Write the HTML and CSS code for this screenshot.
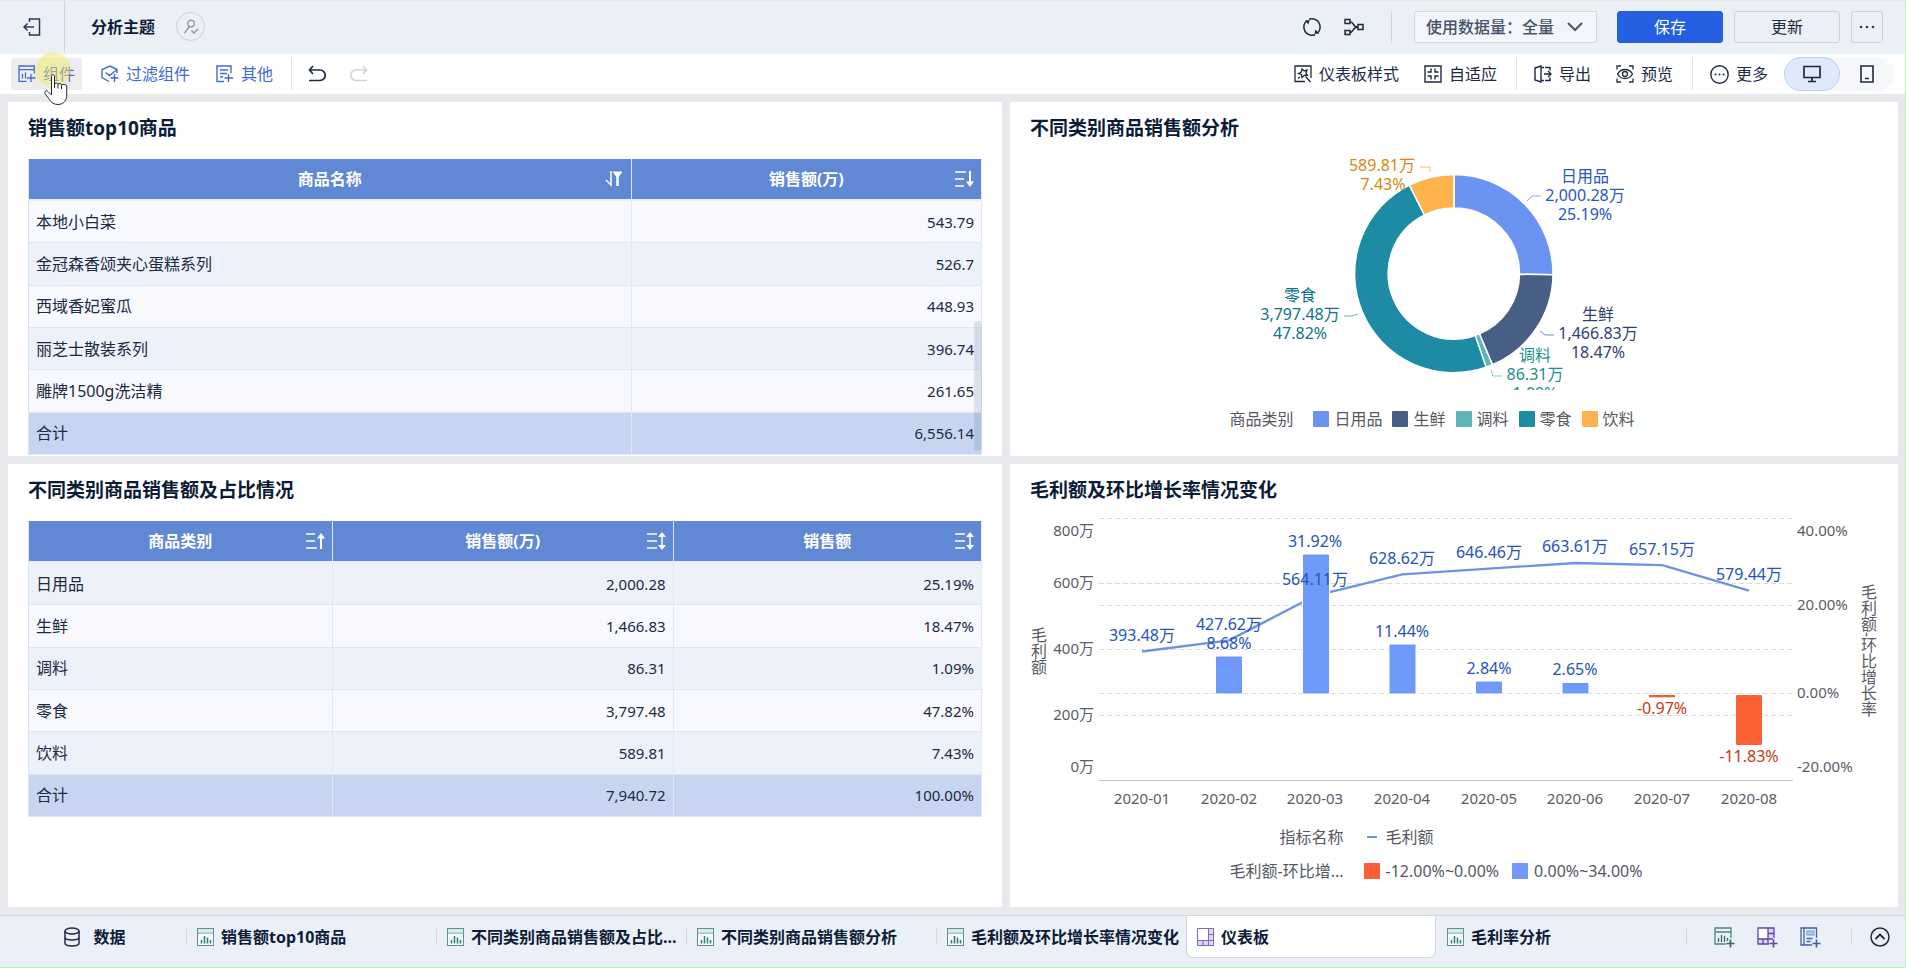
FILE: index.html
```html
<!DOCTYPE html>
<html lang="zh-CN">
<head>
<meta charset="utf-8">
<title>分析主题</title>
<link rel="stylesheet" href="styles.css">
</head>
<body>
<svg class="defs" aria-hidden="true">
  <symbol id="i-chart" viewBox="0 0 17 18">
    <rect x="0.5" y="0.5" width="16" height="17" fill="#f4faf9" stroke="#5f908f"/>
    <path d="M1 5h15" stroke="#5f908f"/><path d="M1 1h15v3.5H1z" fill="#d8ebea"/>
    <path d="M4.500 12v3.500M7.500 8v7.500M10.500 9.500v6M13.500 12v3.500" stroke="#2f7d76" stroke-width="1.500"/>
  </symbol>
  <symbol id="i-board" viewBox="0 0 17 18">
    <rect x="0.5" y="0.5" width="16" height="17" fill="#dcd6f5"/>
    <rect x="0.5" y="0.5" width="11" height="12" fill="#fff"/>
    <path d="M.5.5h16v17H.5zM11.500.5v17M.5 12.500h16M11.500 6.500h5M6 12.500v5" fill="none" stroke="#7a6bc0"/>
  </symbol>
  <symbol id="i-asc" viewBox="0 0 20 18">
    <path d="M1 2h9M1 9h9M1 16h11" stroke="#fff" stroke-width="1.500"/><path d="M16 17V5" stroke="#fff" stroke-width="2"/><path d="M16 1l4 5.500h-8z" fill="#fff"/>
  </symbol>
  <symbol id="i-desc" viewBox="0 0 20 18">
    <path d="M1 2h11M1 9h9M1 16h9" stroke="#fff" stroke-width="1.500"/><path d="M16 1v12" stroke="#fff" stroke-width="2"/><path d="M16 17l4-5.500h-8z" fill="#fff"/>
  </symbol>
  <symbol id="i-both" viewBox="0 0 20 18">
    <path d="M1 2h10M1 9h10M1 16h10" stroke="#fff" stroke-width="1.500"/><path d="M16 3v12" stroke="#fff" stroke-width="1.500"/><path d="M16 0l4 5h-8zM16 18l4-5h-8z" fill="#fff"/>
  </symbol>
</svg>

<header class="topbar">
  <button class="back" aria-label="退出">
    <svg width="18" height="18" viewBox="0 0 18 18"><path d="M6.500 4V1h10v16h-10v-3M1 9h10M4.500 5.500L1 9l3.500 3.500" fill="none" stroke="#2b3a52" stroke-width="1.500"/></svg>
  </button>
  <h1 class="doc-title">分析主题</h1>
  <button class="avatar" aria-label="协作者">
    <svg width="16" height="16" viewBox="0 0 16 16" fill="none" stroke="#8d939d" stroke-width="1.300"><circle cx="8" cy="4.500" r="3.300"/><path d="M6.500 7.500L1.500 14M8.500 11.500l2.500 2.500 4-4"/></svg>
  </button>
  <div class="top-right">
    <button class="ico" aria-label="刷新"><svg width="20" height="20" viewBox="0 0 20 20"><path d="M8 18A8.300 8.300 0 0 1 4.500 4M12 2A8.300 8.300 0 0 1 15.500 16M7 2.200a8.300 8.300 0 0 1 5-.2M13 17.800a8.300 8.300 0 0 1-5 .2" fill="none" stroke="#1c2a42" stroke-width="1.500"/><path d="M3 3.500l4.500-.5-1 4.500zM17 16.500l-4.500.5 1-4.500z" fill="#1c2a42"/></svg></button>
    <button class="ico" aria-label="血缘"><svg width="20" height="18" viewBox="0 0 20 18" fill="none" stroke="#1c2a42" stroke-width="1.500"><path d="M1 1.500h5v4H1zM1 12.500h5v4H1zM14 6.500h5v5h-5zM6 3.500c4 0 2 5.500 8 5.500M6 14.500c4 0 2-5.500 8-5.500"/></svg></button>
    <span class="sep top-sep"></span>
    <label class="select-box">
      <select aria-label="使用数据量"><option>使用数据量：全量</option></select>
      <svg width="16" height="10" viewBox="0 0 16 10"><path d="M1 1l7 7 7-7" fill="none" stroke="#4a566b" stroke-width="2"/></svg>
    </label>
    <button class="btn primary">保存</button>
    <button class="btn">更新</button>
    <button class="btn dots" aria-label="更多操作"><svg width="16" height="4" viewBox="0 0 16 4" fill="#333e50"><circle cx="2" cy="2" r="1.300"/><circle cx="8" cy="2" r="1.300"/><circle cx="14" cy="2" r="1.300"/></svg></button>
  </div>
</header>

<nav class="toolbar">
  <button class="tool hover">
    <svg width="18" height="18" viewBox="0 0 18 18" fill="none" stroke="#4468d0" stroke-width="1.300"><path d="M16.300 8.500V1H1v15.300h7.500M1 4.700h15.300M4.500 9v4.500M7.500 7.500v6M13 9v8M9 13h8.500"/></svg>
    <span>组件</span>
  </button>
  <button class="tool">
    <svg width="18" height="18" viewBox="0 0 18 18" fill="none" stroke="#4468d0" stroke-width="1.400"><path d="M16 8V4.500L9 1 1 4.500v8L8 16.500M4.500 7.500l4 3 7.500-6M13.500 9v8M9.500 13h8"/></svg>
    <span>过滤组件</span>
  </button>
  <button class="tool">
    <svg width="18" height="18" viewBox="0 0 18 18" fill="none" stroke="#4468d0" stroke-width="1.400"><path d="M15 8V1H1v15.500h7M4 5h8M4 8.500h7M4 12h3M12.500 9v8M8.500 13h8.500"/></svg>
    <span>其他</span>
  </button>
  <span class="sep"></span>
  <button class="tool icon-only" aria-label="撤销"><svg width="18" height="18" viewBox="0 0 18 18" fill="none" stroke="#1c2a42" stroke-width="1.700"><path d="M5 1L1.500 5 5 9M1.500 5H12a4.800 4.800 0 0 1 0 10.500H1"/></svg></button>
  <button class="tool icon-only" aria-label="重做" disabled><svg width="18" height="18" viewBox="0 0 18 18" fill="none" stroke="#d2d4d8" stroke-width="1.700"><path d="M13 1l3.500 4L13 9M16.500 5H6a4.800 4.800 0 0 0 0 10.500h11"/></svg></button>

  <div class="tools-right">
    <button class="tool dark">
      <svg width="18" height="18" viewBox="0 0 18 18" fill="none" stroke="#1c2a42" stroke-width="1.300"><path d="M11 16.500H1V1h16v12M11.500 11.500l5 5.500M8 4l2 1.800 3-.8-1 3 1.500 2.500-3-.3L8 12.500l-.6-3L4.500 8.500 7.300 7zM4 13.500l2-1.500"/></svg>
      <span>仪表板样式</span>
    </button>
    <button class="tool dark">
      <svg width="18" height="18" viewBox="0 0 18 18" fill="none" stroke="#1c2a42" stroke-width="1.400"><path d="M1 1h16v16H1zM7 3.500V7H3.500M11 3.500V7h3.500M7 14.500V11H3.500M11 14.500V11h3.500"/></svg>
      <span>自适应</span>
    </button>
    <span class="sep"></span>
    <button class="tool dark">
      <svg width="18" height="18" viewBox="0 0 18 18" fill="none" stroke="#1c2a42" stroke-width="1.400"><path d="M1 3l6-2v16l-6-2zM7 2.500h3M7 15.500h3M11 2.500h5v3M11 15.500h5v-3M10 9h7M14 6l3 3-3 3"/></svg>
      <span>导出</span>
    </button>
    <button class="tool dark">
      <svg width="18" height="18" viewBox="0 0 18 18" fill="none" stroke="#1c2a42" stroke-width="1.300"><path d="M1 4.500V1h4M13 1h4v3.500M1 13.500V17h4M13 17h4v-3.500M1.500 9C5 3 13 3 16.500 9 13 15 5 15 1.500 9z"/><circle cx="9" cy="9" r="2.500"/></svg>
      <span>预览</span>
    </button>
    <span class="sep"></span>
    <button class="tool dark last">
      <svg width="19" height="19" viewBox="0 0 19 19"><circle cx="9.500" cy="9.500" r="8.700" fill="none" stroke="#1c2a42" stroke-width="1.400"/><g fill="#1c2a42"><circle cx="5.500" cy="9.500" r="1"/><circle cx="9.500" cy="9.500" r="1"/><circle cx="13.500" cy="9.500" r="1"/></g></svg>
      <span>更多</span>
    </button>
    <div class="device">
      <button class="dev on" aria-label="电脑端"><svg width="18" height="18" viewBox="0 0 18 18" fill="none" stroke="#1c2a42" stroke-width="1.700"><path d="M1 1.500h16v11H1zM9 12.500v4M5 16.500h8"/></svg></button>
      <button class="dev" aria-label="移动端"><svg width="14" height="18" viewBox="0 0 14 18" fill="none" stroke="#1c2a42" stroke-width="1.600"><path d="M1 1h12v16H1zM5 13.500h4"/></svg></button>
    </div>
  </div>
</nav>

<svg class="pointer" width="40" height="54" viewBox="35 52 40 54" aria-hidden="true">
  <circle cx="53" cy="70" r="17.500" fill="#f2ea62" fill-opacity=".5"/>
  <path d="M51.500 76.500c0-2.500 3-2.500 3 0V84c.5-1.500 3.300-1.300 3.500.3.500-1.300 3.500-1 3.500.7.500-1 5.200-.8 5.200 1v9c0 5-3 9.500-8.700 9.500-4 0-7-2-8.500-5l-4.500-6c-.8-2.500 1.500-3.500 3-2l3.500 3.500z" fill="#fff" stroke="#2a2a33" stroke-width="1"/>
  <path d="M54.500 83v5M58 84v4.500M61.500 85v4" stroke="#2a2a33"/>
</svg>

<main class="board">
  <section class="panel">
    <h2>销售额top10商品</h2>
    <div class="table-wrap">
      <table class="grid light-first">
        <colgroup><col class="c-name"><col></colgroup>
        <thead><tr>
          <th><div class="th"><span>商品名称</span><svg width="20" height="18" viewBox="-1 0 20 18"><path d="M6 1v14L1 10" fill="none" stroke="#fff" stroke-width="1.500"/><path d="M8 2h9M8.500 2.500l4 5 4-5z" stroke="#fff" fill="#fff"/><path d="M12.500 5v11" stroke="#fff" stroke-width="2.500"/></svg></div></th>
          <th><div class="th"><span>销售额(万)</span><svg width="20" height="18"><use href="#i-desc"/></svg></div></th>
        </tr></thead>
        <tbody>
          <tr><td>本地小白菜</td><td class="num">543.79</td></tr>
          <tr><td>金冠森香颂夹心蛋糕系列</td><td class="num">526.7</td></tr>
          <tr><td>西域香妃蜜瓜</td><td class="num">448.93</td></tr>
          <tr><td>丽芝士散装系列</td><td class="num">396.74</td></tr>
          <tr><td>雕牌1500g洗洁精</td><td class="num">261.65</td></tr>
          <tr class="total"><td>合计</td><td class="num">6,556.14</td></tr>
        </tbody>
      </table>
      <span class="scroll-thumb"></span>
    </div>
  </section>

  <section class="panel chart-panel">
    <h2>不同类别商品销售额分析</h2>
    <svg class="chart" viewBox="1010 144 888 246" role="img" aria-label="不同类别商品销售额分析">
      <g stroke="#fff" stroke-width="1.500">
        <path d="M1454 174.500A99 99 0 0 1 1553 274.700L1519.500 274.300A65.500 65.500 0 0 0 1454 208z" fill="#6b94f2"/>
        <path d="M1553 274.700A99 99 0 0 1 1492.400 364.700L1479.400 333.900A65.500 65.500 0 0 0 1519.500 274.300z" fill="#485e84"/>
        <path d="M1492.400 364.700A99 99 0 0 1 1486.100 367.200L1475.200 335.500A65.500 65.500 0 0 0 1479.400 333.900z" fill="#5eb5b7"/>
        <path d="M1486.100 367.200A99 99 0 0 1 1409.400 185.100L1424.500 215A65.500 65.500 0 0 0 1475.200 335.500z" fill="#1d8ba4"/>
        <path d="M1409.400 185.100A99 99 0 0 1 1454 174.500L1454 208A65.500 65.500 0 0 0 1424.500 215z" fill="#ffb34d"/>
      </g>
      <g fill="none" stroke-width="1">
        <path d="M1420 167h10v5" stroke="#f2bd77"/>
        <path d="M1527 201l5-5h9" stroke="#8fabf0"/>
        <path d="M1540 331l5 4h9" stroke="#7e8ba6"/>
        <path d="M1491 370l2 6h9" stroke="#8cc9ca"/>
        <path d="M1358 314l-6 2h-8" stroke="#6db2c0"/>
      </g>
      <g class="label">
        <g fill="#d9860f"><text x="1382" y="171">589.81万</text><text x="1383" y="190">7.43%</text></g>
        <g fill="#2a56c0"><text x="1585" y="182">日用品</text><text x="1585" y="201">2,000.28万</text><text x="1585" y="220">25.19%</text></g>
        <g fill="#2f3f70"><text x="1598" y="320">生鲜</text><text x="1598" y="339">1,466.83万</text><text x="1598" y="358">18.47%</text></g>
        <g fill="#1e8f8e"><text x="1535" y="361">调料</text><text x="1535" y="380">86.31万</text><text x="1535" y="399">1.09%</text></g>
        <g fill="#117388"><text x="1300" y="301">零食</text><text x="1300" y="320">3,797.48万</text><text x="1300" y="339">47.82%</text></g>
      </g>
    </svg>
    <div class="legend pie-legend">
      <span class="lg-title">商品类别</span>
      <span class="lg"><i class="sw blue"></i>日用品</span>
      <span class="lg"><i class="sw navy"></i>生鲜</span>
      <span class="lg"><i class="sw aqua"></i>调料</span>
      <span class="lg"><i class="sw teal"></i>零食</span>
      <span class="lg"><i class="sw amber"></i>饮料</span>
    </div>
  </section>

  <section class="panel">
    <h2>不同类别商品销售额及占比情况</h2>
    <div class="table-wrap">
      <table class="grid">
        <colgroup><col class="c-a"><col class="c-b"><col></colgroup>
        <thead><tr>
          <th><div class="th"><span>商品类别</span><svg width="20" height="18"><use href="#i-asc"/></svg></div></th>
          <th><div class="th"><span>销售额(万)</span><svg width="20" height="18"><use href="#i-both"/></svg></div></th>
          <th><div class="th"><span>销售额</span><svg width="20" height="18"><use href="#i-both"/></svg></div></th>
        </tr></thead>
        <tbody>
          <tr><td>日用品</td><td class="num">2,000.28</td><td class="num">25.19%</td></tr>
          <tr><td>生鲜</td><td class="num">1,466.83</td><td class="num">18.47%</td></tr>
          <tr><td>调料</td><td class="num">86.31</td><td class="num">1.09%</td></tr>
          <tr><td>零食</td><td class="num">3,797.48</td><td class="num">47.82%</td></tr>
          <tr><td>饮料</td><td class="num">589.81</td><td class="num">7.43%</td></tr>
          <tr class="total"><td>合计</td><td class="num">7,940.72</td><td class="num">100.00%</td></tr>
        </tbody>
      </table>
    </div>
  </section>

  <section class="panel chart-panel">
    <h2>毛利额及环比增长率情况变化</h2>
    <svg class="chart" viewBox="1010 506 888 314" role="img" aria-label="毛利额及环比增长率情况变化">
      <path d="M1099 518.500h694M1099 583.500h694M1099 605.500h694M1099 649.500h694M1099 693.500h694M1099 715.500h694" stroke="#dcdcdf" stroke-dasharray="5 3"/>
      <path d="M1099 780.500h694" stroke="#c6c6c9"/>
      <polyline points="1142,651.500 1229,640.300 1315.600,595.600 1402.300,574.400 1489,568.600 1575.600,563 1662.300,565.100 1749,590.600" fill="none" stroke="#6f92e2" stroke-width="2.300"/>
      <g fill="#6f99fb" stroke="#fff">
        <rect x="1215.500" y="656" width="27" height="38" rx="1.500"/>
        <rect x="1302.500" y="554" width="27" height="140" rx="1.500"/>
        <rect x="1389" y="644" width="27" height="50" rx="1.500"/>
        <rect x="1475.500" y="681" width="27" height="13" rx="1.500"/>
        <rect x="1562" y="682.500" width="27" height="11.500" rx="1.500"/>
      </g>
      <rect x="1649" y="695" width="26" height="2.300" fill="#e5603f"/>
      <rect x="1736" y="695" width="26" height="50" rx="1.500" fill="#fa6033"/>
      <g class="label" fill="#2553bd">
        <text x="1142" y="641">393.48万</text><text x="1229" y="630">427.62万</text><text x="1229" y="649">8.68%</text>
        <text x="1315" y="547">31.92%</text><text x="1315" y="585">564.11万</text>
        <text x="1402" y="564">628.62万</text><text x="1402" y="637">11.44%</text>
        <text x="1489" y="558">646.46万</text><text x="1489" y="674">2.84%</text>
        <text x="1575" y="552">663.61万</text><text x="1575" y="675">2.65%</text>
        <text x="1662" y="555">657.15万</text><text x="1749" y="580">579.44万</text>
      </g>
      <g class="label" fill="#c53a16"><text x="1662" y="714">-0.97%</text><text x="1749" y="762">-11.83%</text></g>
      <g class="axis end"><text x="1094" y="536">800万</text><text x="1094" y="588">600万</text><text x="1094" y="654">400万</text><text x="1094" y="720">200万</text><text x="1094" y="772">0万</text></g>
      <g class="axis"><text x="1797" y="536">40.00%</text><text x="1797" y="610">20.00%</text><text x="1797" y="698">0.00%</text><text x="1797" y="772">-20.00%</text></g>
      <g class="axis mid">
        <text x="1142" y="804">2020-01</text><text x="1229" y="804">2020-02</text><text x="1315" y="804">2020-03</text><text x="1402" y="804">2020-04</text>
        <text x="1489" y="804">2020-05</text><text x="1575" y="804">2020-06</text><text x="1662" y="804">2020-07</text><text x="1749" y="804">2020-08</text>
      </g>
      <text class="axis-title" x="1038" y="627">毛利额</text>
      <text class="axis-title" x="1868" y="584">毛利额-环比增长率</text>
    </svg>
    <div class="legend combo-legend">
      <span class="lg-title">指标名称</span>
      <div class="lg-items"><span class="lg"><i class="dash"></i>毛利额</span></div>
      <span class="lg-title">毛利额-环比增...</span>
      <div class="lg-items"><span class="lg"><i class="sw red"></i>-12.00%~0.00%</span><span class="lg"><i class="sw sky"></i>0.00%~34.00%</span></div>
    </div>
  </section>
</main>

<footer class="tabbar">
  <button class="data-tab"><svg width="16" height="20" viewBox="0 0 16 20" fill="none" stroke="#1c2a42" stroke-width="1.500"><ellipse cx="8" cy="4" rx="7" ry="3"/><path d="M1 4v12c0 4 14 4 14 0V4M1 10c0 4 14 4 14 0"/></svg><span>数据</span></button>
  <button class="tab"><svg width="17" height="18"><use href="#i-chart"/></svg><span>销售额top10商品</span></button>
  <button class="tab"><svg width="17" height="18"><use href="#i-chart"/></svg><span>不同类别商品销售额及占比...</span></button>
  <button class="tab"><svg width="17" height="18"><use href="#i-chart"/></svg><span>不同类别商品销售额分析</span></button>
  <button class="tab"><svg width="17" height="18"><use href="#i-chart"/></svg><span>毛利额及环比增长率情况变化</span></button>
  <button class="tab active"><svg width="17" height="18"><use href="#i-board"/></svg><span>仪表板</span></button>
  <button class="tab plain"><svg width="17" height="18"><use href="#i-chart"/></svg><span>毛利率分析</span></button>
  <div class="tab-actions">
    <span class="sep short first"></span>
    <button class="ico" aria-label="新建组件"><svg width="21" height="21" viewBox="0 0 21 21" fill="none" stroke="#2f6d66" stroke-width="1.300"><path d="M17 11V1H1v16h11M1 5h16" stroke="#4f8683"/><path d="M4.500 11v4M7.500 8v7M10.500 9v6M13.500 11v3"/><path d="M16.500 12.500v8M12.500 16.500h8" stroke-width="1.700"/></svg></button>
    <button class="ico" aria-label="新建仪表板"><svg width="21" height="21" viewBox="0 0 21 21" fill="none" stroke="#5a48ad" stroke-width="1.300"><path d="M11 1h6v11h-6zM1 12h10v5H1z" fill="#dcd6f5" stroke="none"/><path d="M1 1h10v11H1z" fill="#fff" stroke="none"/><path d="M17 11V1H1v16h11M11 1v16M1 12h15M11 6.500h6M6 12v5"/><path d="M16.500 12.500v8M12.500 16.500h8" stroke-width="1.700"/></svg></button>
    <button class="ico" aria-label="新建报告"><svg width="21" height="21" viewBox="0 0 21 21" fill="none" stroke="#4062a8" stroke-width="1.300"><path d="M16.500 11V1H1v17h11M4 1v17"/><path d="M7 4h7v4H7z" fill="#a9c3ef" stroke="#8fb0e6"/><path d="M6.500 11.500h6M6.500 14.500h4"/><path d="M16.500 12.500v8M12.500 16.500h8" stroke-width="1.700"/></svg></button>
    <span class="sep short"></span>
    <button class="ico" aria-label="收起"><svg width="20" height="20" viewBox="0 0 20 20" fill="none" stroke="#1c2a42" stroke-width="1.500"><circle cx="10" cy="10" r="9"/><path d="M5.500 12L10 7.500l4.500 4.500" stroke-width="1.800"/></svg></button>
  </div>
</footer>
</body>
</html>
```
FILE: styles.css
```css
* { box-sizing: border-box; }
body {
  margin: 0;
  height: 100vh;
  min-height: 900px;
  display: flex;
  flex-direction: column;
  font-family: "Noto Sans", "Noto Sans CJK SC", sans-serif;
  font-size: 16px;
  line-height: 24px;
  color: #1c2a42;
  background: #e8e9ed;
  border-right: 1px solid #b9fbb0;
  border-bottom: 1px solid #b4f9ab;
}
button, select { font: inherit; color: inherit; }
button { border: 0; background: none; padding: 0; display: flex; align-items: center; justify-content: center; }
svg { flex: none; display: block; }
h1, h2 { margin: 0; }
.defs { position: absolute; width: 0; height: 0; }
.sep { width: 1px; height: 32px; background: #dfe1e6; flex: none; }

.topbar {
  height: 54px;
  flex: none;
  display: flex;
  align-items: center;
  background: #ebeff6;
  border-top: 1px solid #e5ecdc;
  padding-bottom: 2px;
}
.back { width: 65px; align-self: stretch; border-right: 1px solid #cfd3da; }
.doc-title { font-size: 16px; line-height: 24px; color: #0c1c38; margin: 0 21px 0 26px; }
.avatar { width: 29px; height: 29px; border: 1px solid #ced1d7; border-radius: 50%; }
.top-right { margin-left: auto; display: flex; align-items: center; padding-right: 22px; }
.top-right .ico { margin-right: 22px; }
.top-sep { background: #cfd3da; margin: 0 22px 0 5px; }
.select-box {
  width: 183px;
  height: 32px;
  display: flex;
  align-items: center;
  background: #f2f5fa;
  border: 1px solid #d2d6de;
  border-radius: 2px;
  padding: 0 13px 0 11px;
  margin-right: 20px;
}
.select-box select { flex: 1; min-width: 0; appearance: none; border: 0; background: none; padding: 0; color: #46536a; font-weight: 500; }
.btn {
  width: 106px;
  height: 32px;
  border: 1px solid #ced3db;
  border-radius: 3px;
  margin-right: 11px;
}
.btn.primary { background: #2560e2; border-color: #2560e2; color: #fff; }
.btn.dots { width: 32px; margin-right: 0; }

.toolbar { height: 40px; flex: none; display: flex; align-items: center; background: #fff; padding: 0 11px; }
.tool { height: 32px; gap: 7px; padding: 0 7px; color: #4468d0; margin-right: 12px; border-radius: 3px; }
.tool.hover { background: #ededef; }
.toolbar > .sep { margin: 0 9px 0 -1px; }
.icon-only { margin-right: 10px; }
.tool.dark { color: #1c2a42; padding: 0; margin-right: 25px; }
.tools-right { margin-left: auto; display: flex; align-items: center; }
.tools-right .sep { margin: 0 17px 0 -6px; }
.tool.dark.last { margin-right: 16px; }
.device { display: flex; background: #f7f8fb; border-radius: 17px; }
.dev { width: 54px; height: 34px; border-radius: 17px; }
.dev.on { width: 56px; background: #dfe9fc; border: 1px solid #b7cffa; }

.pointer { position: absolute; left: 35px; top: 52px; z-index: 2; pointer-events: none; }

.board {
  flex: 1;
  min-height: 0;
  display: grid;
  grid-template-columns: 994fr 888fr;
  grid-template-rows: 354fr 443fr;
  gap: 8px;
  padding: 8px 7px 8px 8px;
}
.panel { background: #fff; padding: 10px 20px 0; min-width: 0; min-height: 0; overflow: hidden; }
.panel h2 { font-size: 19px; line-height: 32px; color: #0c1c38; }
.table-wrap { position: relative; margin-top: 15px; }
.grid { width: 100%; height: 296px; border-collapse: separate; border-spacing: 0; table-layout: fixed; border-left: 1px solid #dce5f5; border-right: 1px solid #e3e9f5; }
.c-name { width: 63.2%; }
.c-a { width: 31.8%; }
.c-b { width: 35.8%; }
.grid th { height: 42px; padding: 0 7px; background: #6088d5; color: #fff; font-weight: 700; border-bottom: 2px solid #e9effa; }
.grid th + th { border-left: 1px solid #dfe7f7; }
.th { display: flex; align-items: center; padding-left: 20px; }
.th span { flex: 1; }
.grid td { padding: 0 7px; background: #edf1fa; border-bottom: 1px solid #e1e7f2; }
.grid td + td { border-left: 1px solid #e1e7f2; }
.grid tr:nth-child(even) td { background: #f7f9fe; }
.light-first tr:nth-child(odd) td { background: #f7f9fe; }
.light-first tr:nth-child(even) td { background: #edf1fa; }
.grid tr.total:last-child td { background: #c8d5f0; }
.grid .num { text-align: right; font-size: 15px; }
.scroll-thumb { position: absolute; right: 0; bottom: 4px; width: 8px; height: 130px; border-radius: 4px; background: rgba(50, 70, 120, .13); }

.chart-panel { padding: 10px 0 0; }
.chart-panel h2 { padding: 0 20px; }
.chart { width: 100%; height: auto; }
.label { font-size: 16px; text-anchor: middle; }
.axis { font-size: 15px; fill: #5a5d66; }
.axis.end { text-anchor: end; }
.axis.mid { text-anchor: middle; }
.axis-title { font-size: 16px; fill: #5a5d66; writing-mode: vertical-rl; }

.legend { color: #55585f; }
.pie-legend { display: flex; justify-content: center; gap: 10px; padding: 17px 44px 0 0; }
.pie-legend .lg-title { margin-right: 10px; }
.pie-legend .lg { gap: 5px; }
.combo-legend { display: grid; grid-template-columns: auto auto; justify-content: center; column-gap: 20px; row-gap: 10px; padding: 5px 36px 0 0; }
.combo-legend .lg-title { text-align: right; }
.lg-items { display: flex; gap: 13px; }
.lg { display: flex; align-items: center; gap: 6px; }
.sw { width: 16px; height: 16px; border-radius: 1px; }
.dash { width: 10px; height: 2px; margin: 0 3px; background: #6f92e2; }
.blue { background: #6b94f2; }
.navy { background: #485e84; }
.aqua { background: #5eb5b7; }
.teal { background: #1d8ba4; }
.amber { background: #ffb34d; }
.red { background: #fa6033; }
.sky { background: #6f99fb; }

.tabbar { height: 52px; flex: none; display: flex; align-items: flex-start; background: #ebeff7; border-top: 1px solid #cfd6e0; }
.data-tab, .tab { height: 42px; font-weight: 700; color: #0c1c38; }
.data-tab { flex: none; width: 186px; gap: 13px; padding-left: 4px; }
.tab {
  flex: 0 1 250px;
  min-width: 0;
  justify-content: flex-start;
  gap: 7px;
  padding-left: 11px;
  white-space: nowrap;
  background: linear-gradient(#d3d8e0, #d3d8e0) left center / 1px 16px no-repeat;
}
.tab.active { background: #fff; border: 1px solid #d3d8e0; border-top: 0; border-radius: 0 0 7px 7px; padding-left: 10px; }
.tab.plain { background: none; }
.tab-actions { margin-left: auto; height: 42px; display: flex; align-items: center; gap: 22px; padding-right: 15px; }
.short { height: 16px; background: #d3d8e0; margin: 0 -4px 0 8px; }
.short.first { margin: 0 5px 0 0; }
```
